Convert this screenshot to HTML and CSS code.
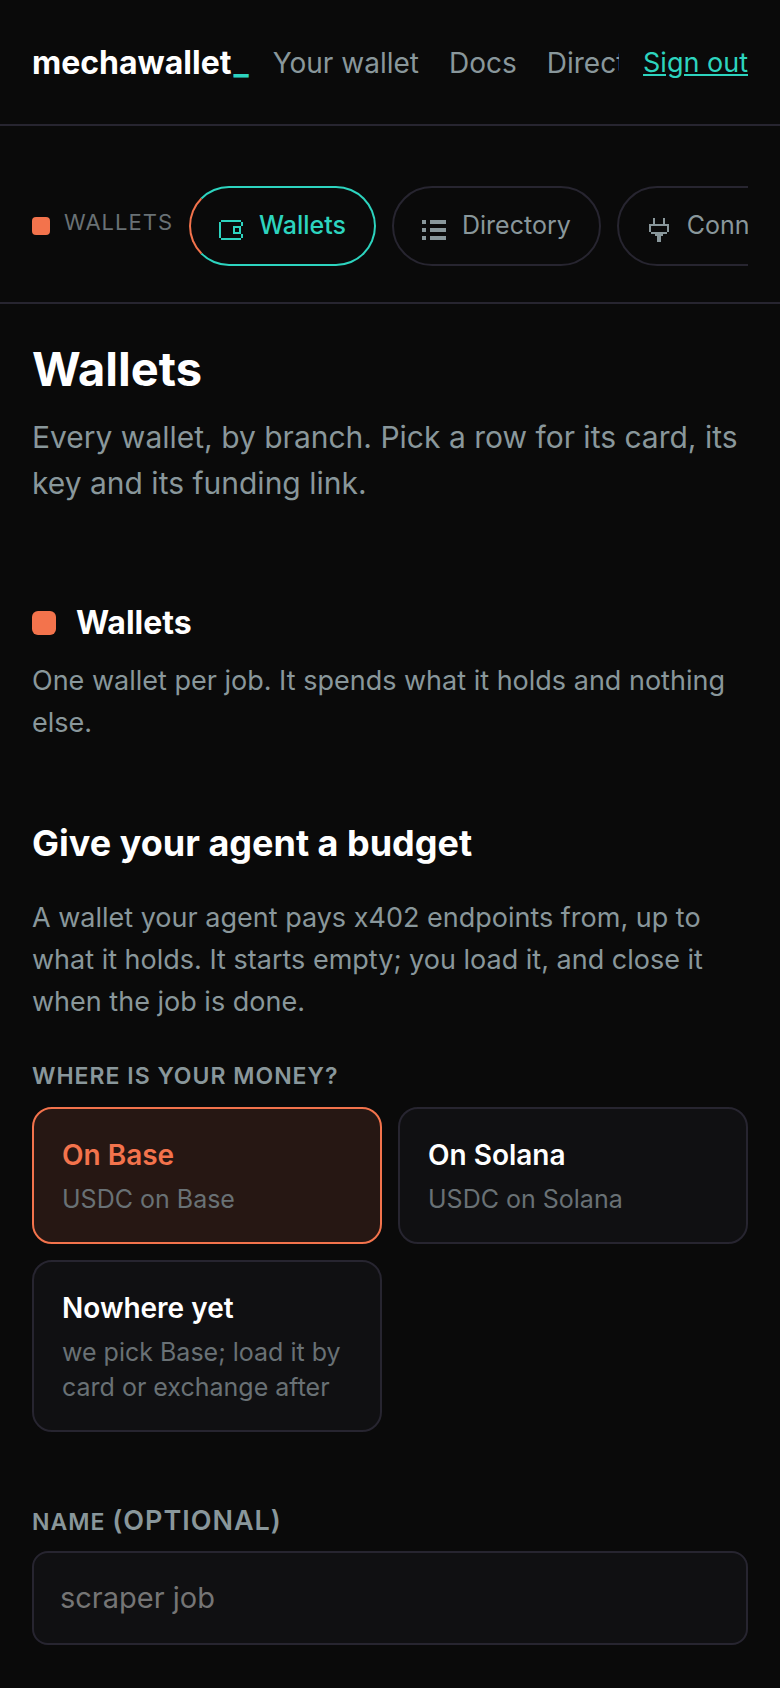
FILE: index.html
```html
<!DOCTYPE html>
<html lang="en">
  <head>
    <meta charset="UTF-8" />
    <meta name="viewport" content="width=device-width, initial-scale=1" />
    <title>mechawallet</title>
    <link rel="stylesheet" href="styles.css">
  </head>
  <body>
    <header class="topbar">
      <a class="brand" href="#">mechawallet<span class="cursor">_</span></a>
      <nav class="topnav" aria-label="Main">
        <a href="#">Your wallet</a>
        <a href="#">Docs</a>
        <a href="#">Directory</a>
      </nav>
      <a class="signout" href="#">Sign out</a>
    </header>

    <div class="subbar">
      <span class="swatch"></span>
      <span class="section-name">Wallets</span>
      <nav class="tabs" aria-label="Sections">
        <a class="tab active" href="#">
          <svg class="icon" viewBox="0 0 24 24" aria-hidden="true">
            <path d="M2 2h20v2H2zM0 4h2v16H0zM2 20h20v2H2zM22 4h2v4h-2zM22 16h2v4h-2z" />
            <path fill-rule="evenodd" d="M14 8h8v8h-8zM16 10v4h4v-4z" />
          </svg>Wallets
        </a>
        <a class="tab" href="#">
          <svg class="icon" viewBox="0 0 24 24" aria-hidden="true">
            <path d="M0 2h4v4H0zM8 2h16v4H8zM0 10h4v4H0zM8 10h16v4H8zM0 18h4v4H0zM8 18h16v4H8z" />
          </svg>Directory
        </a>
        <a class="tab" href="#">
          <svg class="icon" viewBox="0 0 24 24" aria-hidden="true">
            <path d="M6 0h2v6H6zM16 0h2v6h-2zM2 6h20v2H2zM2 8h2v6H2zM20 8h2v6h-2zM4 14h16v2H4zM8 16h8v2H8zM10 18h4v6h-4z" />
          </svg>Connect
        </a>
      </nav>
    </div>

    <main>
      <h1>Wallets</h1>
      <p class="lead">Every wallet, by branch. Pick a row for its card, its key and its funding link.</p>

      <section class="branch">
        <h2><span class="swatch large"></span>Wallets</h2>
        <p>One wallet per job. It spends what it holds and nothing else.</p>
      </section>

      <form class="budget">
        <h3>Give your agent a budget</h3>
        <p>A wallet your agent pays x402 endpoints from, up to what it holds. It starts empty; you load it, and close it when the job is done.</p>

        <fieldset>
          <legend>Where is your money?</legend>
          <div class="choices">
            <label class="choice">
              <input type="radio" name="chain" value="base" checked />
              <strong>On Base</strong>
              <span>USDC on Base</span>
            </label>
            <label class="choice">
              <input type="radio" name="chain" value="solana" />
              <strong>On Solana</strong>
              <span>USDC on Solana</span>
            </label>
            <label class="choice">
              <input type="radio" name="chain" value="any" />
              <strong>Nowhere yet</strong>
              <span>we pick Base; load it by card or exchange after</span>
            </label>
          </div>
        </fieldset>

        <label class="field-label" for="name">Name <span>(optional)</span></label>
        <input class="field" id="name" type="text" placeholder="scraper job" />
      </form>
    </main>
  </body>
</html>
```

FILE: styles.css
```css
:root {
  --bg: #0a0a0a;
  --panel: #101012;
  --line: #272530;
  --text: #ffffff;
  --muted: #89979b;
  --dim: #697175;
  --teal: #2dd4bf;
  --orange: #f3734c;
}
* {
  box-sizing: border-box;
}
body {
  margin: 0;
  background: var(--bg);
  color: var(--muted);
  font-family: Inter, sans-serif;
  font-size: 27px;
  line-height: 42px;
}
h1, h2, h3, p {
  margin: 0;
}
h1, h2, h3 {
  color: var(--text);
  font-weight: 700;
}
a {
  color: inherit;
  text-decoration: none;
}

/* header */
.topbar {
  display: flex;
  align-items: center;
  gap: 24px;
  padding: 42px 32px 40px;
  border-bottom: 2px solid var(--line);
  font-size: 28px;
}
.brand {
  color: var(--text);
  font-size: 32px;
  font-weight: 700;
}
.cursor {
  margin-left: 2px;
  color: var(--teal);
}
.topnav {
  display: flex;
  flex: 1;
  min-width: 0;
  gap: 30px;
  overflow-x: auto;
  scrollbar-width: none;
  white-space: nowrap;
}
.signout {
  color: var(--teal);
  font-size: 27px;
  text-decoration: underline;
  white-space: nowrap;
}

/* section tabs */
.subbar {
  display: flex;
  align-items: center;
  padding: 60px 32px 36px;
  border-bottom: 2px solid var(--line);
}
.swatch {
  flex: none;
  width: 18px;
  height: 18px;
  border-radius: 4px;
  background: var(--orange);
}
.swatch.large {
  width: 24px;
  height: 24px;
  border-radius: 6px;
}
.section-name {
  margin: 0 16px 8px 14px;
  color: var(--dim);
  font-size: 22px;
  letter-spacing: 1px;
  text-transform: uppercase;
}
.tabs {
  display: flex;
  flex: 1;
  min-width: 0;
  gap: 16px;
  overflow-x: auto;
  scrollbar-width: none;
}
.tab {
  flex: none;
  padding: 16px 28px 18px;
  border: 2px solid var(--line);
  border-radius: 40px;
  font-size: 25px;
}
.tab.active {
  border-color: var(--teal);
  border-left-color: var(--orange);
  color: var(--teal);
  font-weight: 500;
}
.icon {
  width: 24px;
  height: 24px;
  margin-right: 16px;
  vertical-align: -8px;
  fill: currentColor;
  shape-rendering: crispEdges;
}

/* page */
main {
  padding: 35px 32px 32px;
}
h1 {
  font-size: 47px;
  line-height: 60px;
}
.lead {
  margin-top: 15px;
  font-size: 30px;
  line-height: 46px;
}
.branch {
  margin-top: 96px;
}
.branch h2 {
  display: flex;
  align-items: center;
  gap: 20px;
  font-size: 32px;
}
.branch p {
  margin-top: 16px;
}
.budget {
  margin-top: 75px;
}
.budget h3 {
  font-size: 36px;
  line-height: 48px;
}
.budget p {
  margin-top: 30px;
}
fieldset {
  margin: 32px 0 0;
  padding: 0;
  border: 0;
}
legend,
.field-label {
  padding: 0;
  font-size: 23px;
  font-weight: 600;
  letter-spacing: 1px;
  text-transform: uppercase;
}
.choices {
  display: grid;
  grid-template-columns: 1fr 1fr;
  gap: 16px;
  margin-top: 10px;
}
.choice {
  padding: 25px 28px;
  border: 2px solid var(--line);
  border-radius: 20px;
  background: var(--panel);
}
.choice input {
  position: absolute;
  opacity: 0;
}
.choice strong,
.choice span {
  display: block;
}
.choice strong {
  color: var(--text);
  font-size: 28px;
  font-weight: 600;
}
.choice span {
  margin-top: 6px;
  color: var(--dim);
  font-size: 25px;
  line-height: 35px;
}
.choice:has(:checked) {
  border-color: var(--orange);
  background: #261713;
}
.choice:has(:checked) strong {
  color: var(--orange);
}
.field-label {
  display: block;
  margin-top: 68px;
}
.field-label span {
  font-size: 27px;
}
.field {
  display: block;
  width: 100%;
  margin-top: 8px;
  padding: 24px 26px;
  border: 2px solid var(--line);
  border-radius: 16px;
  background: var(--panel);
  color: var(--text);
  font: inherit;
  font-size: 29px;
}
.field::placeholder {
  color: #757575;
}
```
